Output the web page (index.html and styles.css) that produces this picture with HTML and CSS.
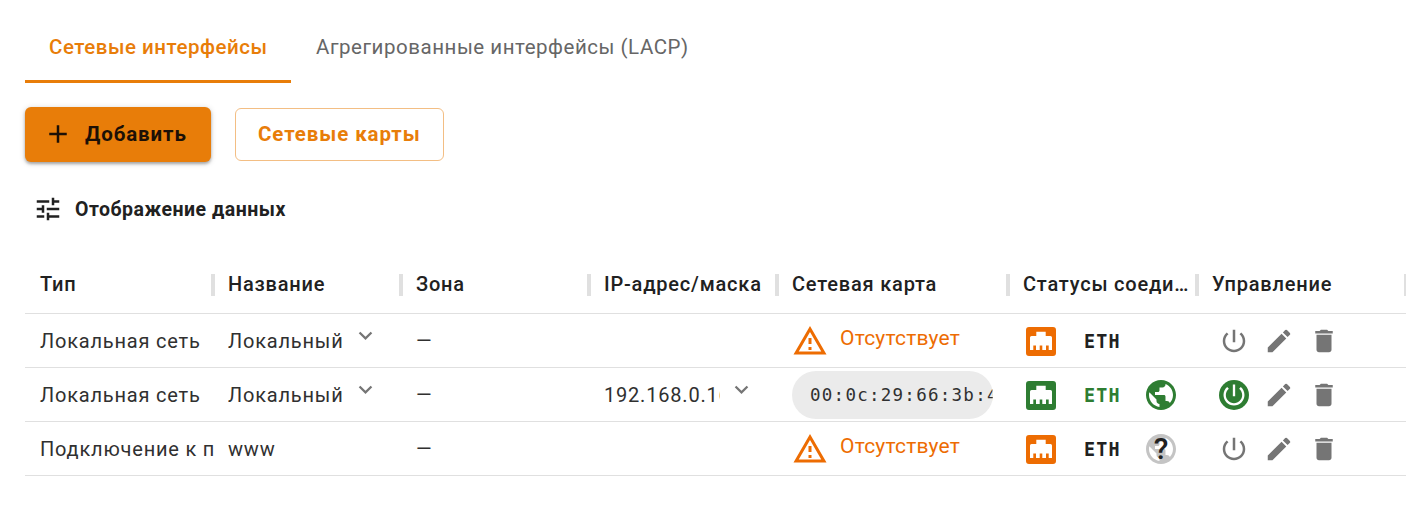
FILE: index.html
```
<!DOCTYPE html>
<html lang="ru">
<head>
<meta charset="utf-8">
<title>Сетевые интерфейсы</title>
<link rel="stylesheet" href="styles.css">
</head>
<body>
<svg class="defs" aria-hidden="true">
  <symbol id="chevron" viewBox="0 0 24 24"><path d="M7.41 8.59 12 13.17l4.59-4.58L18 10l-6 6-6-6z"/></symbol>
  <symbol id="warn" viewBox="0 0 24 24"><path d="M12 5.99 19.53 19H4.47L12 5.99M12 2 1 21h22L12 2zm1 14h-2v2h2v-2zm0-6h-2v4h2v-4z"/></symbol>
  <symbol id="port" viewBox="0 0 30 29"><path fill-rule="evenodd" d="M3 0h24a3 3 0 0 1 3 3v23a3 3 0 0 1-3 3H3a3 3 0 0 1-3-3V3a3 3 0 0 1 3-3zM10.300 4.800v4.200H5.500a1.500 1.500 0 0 0-1.500 1.500V23h3.300v-4.500H10V23h3.700v-4.500h2.600V23H20v-4.500h2.700V23H26V10.500A1.500 1.500 0 0 0 24.500 9h-4.800V4.800z"/></symbol>
  <symbol id="globe" viewBox="0 0 24 24"><path d="M12 2C6.480 2 2 6.480 2 12s4.480 10 10 10 10-4.480 10-10S17.520 2 12 2zM4 12c0-.610.080-1.210.210-1.780L8.990 15v1c0 1.100.9 2 2 2v1.930C7.060 19.430 4 16.070 4 12zm13.890 5.400c-.260-.810-1-1.400-1.900-1.400h-1v-3c0-.550-.450-1-1-1h-6v-2h2c.550 0 1-.450 1-1V7h2c1.100 0 2-.9 2-2v-.410C17.920 5.770 20 8.650 20 12c0 2.080-.810 3.980-2.110 5.400z"/></symbol>
  <symbol id="power" viewBox="0 0 24 24"><path d="M13 3h-2v10h2V3zm4.830 2.170-1.420 1.420C17.990 7.860 19 9.810 19 12c0 3.870-3.130 7-7 7s-7-3.130-7-7c0-2.190 1.010-4.140 2.580-5.420L6.170 5.170C4.230 6.820 3 9.260 3 12c0 4.970 4.030 9 9 9s9-4.030 9-9c0-2.740-1.230-5.180-3.170-6.830z"/></symbol>
  <symbol id="edit" viewBox="0 0 24 24"><path d="M3 17.250V21h3.750L17.810 9.940l-3.750-3.750L3 17.250zM20.710 7.040c.390-.390.390-1.020 0-1.410l-2.340-2.340a.996.996 0 0 0-1.410 0l-1.830 1.830 3.750 3.750 1.830-1.830z"/></symbol>
  <symbol id="trash" viewBox="0 0 24 24"><path d="M6 19c0 1.100.9 2 2 2h8c1.100 0 2-.9 2-2V7H6v12zM19 4h-3.500l-1-1h-5l-1 1H5v2h14V4z"/></symbol>
  <symbol id="tune" viewBox="0 0 24 24"><path d="M3 17v2h6v-2H3zM3 5v2h10V5H3zm10 16v-2h8v-2h-8v-2h-2v6h2zM7 9v2H3v2h4v2h2V9H7zm14 4v-2H11v2h10zm-6-4h2V7h4V5h-4V3h-2v6z"/></symbol>
  <symbol id="plus" viewBox="0 0 24 24"><path d="M19 13h-6v6h-2v-6H5v-2h6V5h2v6h6v2z"/></symbol>
</svg>
<main class="page">
  <nav class="tabs">
    <a class="tab active">Сетевые интерфейсы</a>
    <a class="tab">Агрегированные интерфейсы (LACP)</a>
  </nav>
  <div class="actions">
    <button class="btn primary"><svg class="i30"><use href="#plus"/></svg><span>Добавить</span></button>
    <button class="btn outline"><span>Сетевые карты</span></button>
  </div>
  <div class="display"><svg class="i30"><use href="#tune"/></svg><span>Отображение данных</span></div>
  <section class="grid">
    <div class="row head">
      <div class="cell"><span>Тип</span></div><div class="cell"><span>Название</span></div><div class="cell"><span>Зона</span></div><div class="cell"><span>IP-адрес/маска</span></div><div class="cell"><span>Сетевая карта</span></div><div class="cell"><span>Статусы соеди…</span></div><div class="cell"><span>Управление</span></div>
    </div>
    <div class="row">
      <div class="cell"><span>Локальная сеть</span></div>
      <div class="cell expand"><span class="clip">Локальный</span><svg><use href="#chevron"/></svg></div>
      <div class="cell"><span>—</span></div>
      <div class="cell"></div>
      <div class="cell missing"><svg><use href="#warn"/></svg><span>Отсутствует</span></div>
      <div class="cell status"><svg class="port warn"><use href="#port"/></svg><span class="eth">ETH</span></div>
      <div class="cell manage"><span class="power"><svg class="i30"><use href="#power"/></svg></span><svg class="i30"><use href="#edit"/></svg><svg class="i30"><use href="#trash"/></svg></div>
    </div>
    <div class="row">
      <div class="cell"><span>Локальная сеть</span></div>
      <div class="cell expand"><span class="clip">Локальный</span><svg><use href="#chevron"/></svg></div>
      <div class="cell"><span>—</span></div>
      <div class="cell expand"><span class="clip">192.168.0.16</span><svg><use href="#chevron"/></svg></div>
      <div class="cell"><span class="mac">00:0c:29:66:3b:4</span></div>
      <div class="cell status"><svg class="port ok"><use href="#port"/></svg><span class="eth ok">ETH</span><svg class="globe ok"><use href="#globe"/></svg></div>
      <div class="cell manage"><span class="power on"><svg><use href="#power"/></svg></span><svg class="i30"><use href="#edit"/></svg><svg class="i30"><use href="#trash"/></svg></div>
    </div>
    <div class="row">
      <div class="cell"><span>Подключение к п</span></div>
      <div class="cell"><span>www</span></div>
      <div class="cell"><span>—</span></div>
      <div class="cell"></div>
      <div class="cell missing"><svg><use href="#warn"/></svg><span>Отсутствует</span></div>
      <div class="cell status"><svg class="port warn"><use href="#port"/></svg><span class="eth">ETH</span><span class="unknown"><svg class="globe"><use href="#globe"/></svg><b>?</b></span></div>
      <div class="cell manage"><span class="power"><svg class="i30"><use href="#power"/></svg></span><svg class="i30"><use href="#edit"/></svg><svg class="i30"><use href="#trash"/></svg></div>
    </div>
  </section>
</main>
</body>
</html>
```
FILE: styles.css
```
* { box-sizing: border-box; }
body { margin: 0; background: #fff; color: #212121; font-family: Roboto, sans-serif; }
svg { display: block; flex: none; fill: currentColor; }
.defs { position: absolute; width: 0; height: 0; }
.i30 { width: 30px; height: 30px; }
.page { width: 1426px; height: 515px; padding: 11px 20px 0 25px; overflow: hidden; }
.tabs { display: flex; height: 72px; }
.tab { padding: 0 24px 0 25px; font-size: 20.500px; line-height: 73px; letter-spacing: .53px; color: #666; white-space: nowrap; border-bottom: 3px solid transparent; }
.tab.active { width: 266px; padding: 0 24px; font-weight: 500; letter-spacing: .52px; color: #e87d09; border-color: #e87d09; }
.actions { display: flex; align-items: center; gap: 24px; height: 55px; margin-top: 24px; }
.btn { display: flex; align-items: center; height: 55px; padding: 0 18px; border: 0; border-radius: 6px; font: 700 20.500px Roboto, sans-serif; letter-spacing: .9px; white-space: nowrap; }
.btn span { margin-bottom: 2px; }
.primary { width: 186px; gap: 12px; background: #e87d09; color: #1c1006; box-shadow: 0 2px 3px rgba(0,0,0,.28), 0 1px 6px rgba(0,0,0,.16); }
.primary svg { margin-bottom: 2px; }
.outline { width: 209px; height: 53px; padding: 0 22px; background: #fff; color: #e87d09; border: 1px solid #f3be84; }
.display { display: flex; align-items: center; gap: 12px; height: 40px; margin: 27px 0 0 8px; font-size: 19.500px; font-weight: 700; letter-spacing: .5px; }
.grid { margin-top: 27px; }
.row { display: grid; grid-template-columns: 188px 188px 188px 188px 231px 189px 209px; height: 54px; border-bottom: 1px solid #e0e0e0; color: #303030; font-size: 20px; letter-spacing: .8px; }
.cell { display: flex; align-items: center; min-width: 0; padding-left: 15px; white-space: nowrap; }
.head { height: 58px; color: #212121; font-weight: 500; letter-spacing: .8px; }
.head .cell { justify-content: space-between; }
.head .cell span { margin-bottom: 2px; }
.head .cell::after { content: ""; flex: none; width: 4px; height: 22px; margin-right: -2px; background: #e0e0e0; }
.head .cell:last-child::after { width: 2px; margin-right: 0; }
.clip { width: 116px; overflow: hidden; }
.expand svg { width: 27px; height: 27px; margin: 0 0 10px 8px; color: #757575; }
.missing { color: #ed6c02; gap: 12px; }
.missing svg { width: 36px; height: 36px; }
.missing span { margin-bottom: 5px; font-size: 21px; letter-spacing: .2px; }
.mac { width: 201px; height: 48px; padding-left: 18px; border-radius: 24px; background: #ebebeb; overflow: hidden; font: 17.500px/49px "DejaVu Sans Mono", monospace; letter-spacing: 1.260px; }
.status { padding-left: 18px; }
.port { width: 30px; height: 29px; margin-top: 2px; }
.warn { color: #ed6c02; }
.ok { color: #2e7d32; }
.eth { width: 44px; margin: 0 -9px 0 28px; transform: scaleX(.92); transform-origin: left; color: #212121; font: 700 20px/30px "DejaVu Sans Mono", monospace; letter-spacing: 1.300px; }
.eth.ok { color: #2e7d32; }
.globe { width: 36px; height: 36px; }
.status > .globe, .unknown { margin-left: 24px; }
.unknown { position: relative; width: 36px; height: 36px; color: #c4c4c4; }
.unknown b { position: absolute; inset: 0; color: #212121; font: 500 30px/36px Roboto, sans-serif; letter-spacing: 0; text-align: center; }
.manage { padding-left: 22px; gap: 15px; color: #757575; }
.power { display: flex; align-items: center; justify-content: center; width: 30px; height: 30px; border-radius: 50%; }
.power.on { background: #2e7d32; color: #fff; }
.power.on svg { width: 28px; height: 28px; }
```
